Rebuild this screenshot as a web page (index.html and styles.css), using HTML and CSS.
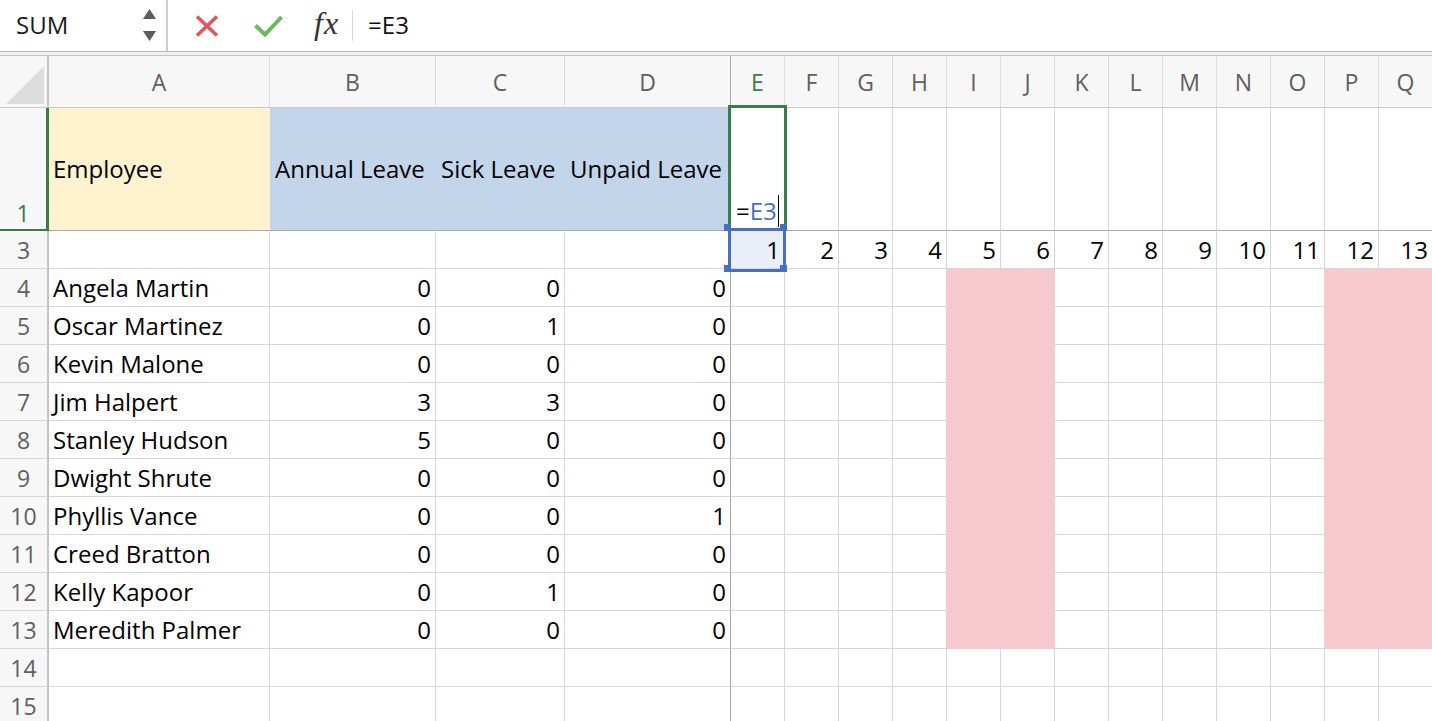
FILE: index.html
```html
<!DOCTYPE html>
<html>
<head>
<meta charset="utf-8">
<link rel="stylesheet" href="styles.css">
</head>
<body>
<div class="app">
  <div class="fbar">
    <div class="namebox">
      <span class="nb-text">SUM</span>
      <svg class="spin" width="13" height="34" viewBox="0 0 13 34"><polygon points="0,10 6.5,0 13,10" fill="#5b5b5b"/><polygon points="0,22 13,22 6.5,32" fill="#5b5b5b"/></svg>
    </div>
    <svg class="ic-x" width="24" height="22" viewBox="0 0 24 22"><path d="M2 1.5 L22 20.5 M22 1.5 L2 20.5" stroke="#d9585b" stroke-width="3.6" fill="none"/></svg>
    <svg class="ic-ok" width="29" height="22" viewBox="0 0 29 22"><path d="M1.5 10.5 L11 19.5 L27.5 2" stroke="#69ba5e" stroke-width="4" fill="none"/></svg>
    <span class="fx">fx</span>
    <div class="fsep"></div>
    <div class="finput">=E3</div>
  </div>
  <div class="fgap"></div>
  <div class="sheet">
    <div class="row hdr">
      <div class="corner"><svg width="40" height="40" viewBox="0 0 40 40"><polygon points="2,40 40,40 40,2" fill="#dcdcdc"/></svg></div>
      <div>A</div><div>B</div><div>C</div><div class="frz">D</div><div class="hsel">E</div><div>F</div><div>G</div><div>H</div><div>I</div><div>J</div><div>K</div><div>L</div><div>M</div><div>N</div><div>O</div><div>P</div><div>Q</div>
    </div>
    <div class="row r1">
      <div class="rh rh1">1</div>
      <div class="yel">Employee</div>
      <div class="blu">Annual Leave</div>
      <div class="blu">Sick Leave</div>
      <div class="blu frz">Unpaid Leave</div>
      <div class="edit">=<span class="ref">E3</span><span class="caret"></span></div>
      <div></div><div></div><div></div><div></div><div></div><div></div><div></div><div></div><div></div><div></div><div></div><div></div>
    </div>
    <div class="row">
      <div class="rh">3</div>
      <div></div><div></div><div></div><div class="frz"></div>
      <div class="n e3">1</div><div class="n">2</div><div class="n">3</div><div class="n">4</div><div class="n">5</div><div class="n">6</div><div class="n">7</div><div class="n">8</div><div class="n">9</div><div class="n">10</div><div class="n">11</div><div class="n">12</div><div class="n">13</div>
    </div>
    <div class="row">
      <div class="rh">4</div><div>Angela Martin</div><div class="n">0</div><div class="n">0</div><div class="n frz">0</div>
      <div></div><div></div><div></div><div class="pl"></div><div class="pink"></div><div class="pink"></div><div></div><div></div><div></div><div></div><div class="pl"></div><div class="pink"></div><div class="pink"></div>
    </div>
    <div class="row">
      <div class="rh">5</div><div>Oscar Martinez</div><div class="n">0</div><div class="n">1</div><div class="n frz">0</div>
      <div></div><div></div><div></div><div class="pl"></div><div class="pink"></div><div class="pink"></div><div></div><div></div><div></div><div></div><div class="pl"></div><div class="pink"></div><div class="pink"></div>
    </div>
    <div class="row">
      <div class="rh">6</div><div>Kevin Malone</div><div class="n">0</div><div class="n">0</div><div class="n frz">0</div>
      <div></div><div></div><div></div><div class="pl"></div><div class="pink"></div><div class="pink"></div><div></div><div></div><div></div><div></div><div class="pl"></div><div class="pink"></div><div class="pink"></div>
    </div>
    <div class="row">
      <div class="rh">7</div><div>Jim Halpert</div><div class="n">3</div><div class="n">3</div><div class="n frz">0</div>
      <div></div><div></div><div></div><div class="pl"></div><div class="pink"></div><div class="pink"></div><div></div><div></div><div></div><div></div><div class="pl"></div><div class="pink"></div><div class="pink"></div>
    </div>
    <div class="row">
      <div class="rh">8</div><div>Stanley Hudson</div><div class="n">5</div><div class="n">0</div><div class="n frz">0</div>
      <div></div><div></div><div></div><div class="pl"></div><div class="pink"></div><div class="pink"></div><div></div><div></div><div></div><div></div><div class="pl"></div><div class="pink"></div><div class="pink"></div>
    </div>
    <div class="row">
      <div class="rh">9</div><div>Dwight Shrute</div><div class="n">0</div><div class="n">0</div><div class="n frz">0</div>
      <div></div><div></div><div></div><div class="pl"></div><div class="pink"></div><div class="pink"></div><div></div><div></div><div></div><div></div><div class="pl"></div><div class="pink"></div><div class="pink"></div>
    </div>
    <div class="row">
      <div class="rh">10</div><div>Phyllis Vance</div><div class="n">0</div><div class="n">0</div><div class="n frz">1</div>
      <div></div><div></div><div></div><div class="pl"></div><div class="pink"></div><div class="pink"></div><div></div><div></div><div></div><div></div><div class="pl"></div><div class="pink"></div><div class="pink"></div>
    </div>
    <div class="row">
      <div class="rh">11</div><div>Creed Bratton</div><div class="n">0</div><div class="n">0</div><div class="n frz">0</div>
      <div></div><div></div><div></div><div class="pl"></div><div class="pink"></div><div class="pink"></div><div></div><div></div><div></div><div></div><div class="pl"></div><div class="pink"></div><div class="pink"></div>
    </div>
    <div class="row">
      <div class="rh">12</div><div>Kelly Kapoor</div><div class="n">0</div><div class="n">1</div><div class="n frz">0</div>
      <div></div><div></div><div></div><div class="pl"></div><div class="pink"></div><div class="pink"></div><div></div><div></div><div></div><div></div><div class="pl"></div><div class="pink"></div><div class="pink"></div>
    </div>
    <div class="row">
      <div class="rh">13</div><div>Meredith Palmer</div><div class="n">0</div><div class="n">0</div><div class="n frz">0</div>
      <div></div><div></div><div></div><div class="pl"></div><div class="pink"></div><div class="pink"></div><div></div><div></div><div></div><div></div><div class="pl"></div><div class="pink"></div><div class="pink"></div>
    </div>
    <div class="row">
      <div class="rh">14</div><div></div><div></div><div></div><div class="frz"></div>
      <div></div><div></div><div></div><div></div><div></div><div></div><div></div><div></div><div></div><div></div><div></div><div></div><div></div>
    </div>
    <div class="row">
      <div class="rh">15</div><div></div><div></div><div></div><div class="frz"></div>
      <div></div><div></div><div></div><div></div><div></div><div></div><div></div><div></div><div></div><div></div><div></div><div></div><div></div>
    </div>

    <div class="sel-edit"></div>
    <div class="sel-ref"></div>
    <div class="handle h-tl"></div>
    <div class="handle h-tr"></div>
    <div class="handle h-bl"></div>
    <div class="handle h-br"></div>
  </div>
</div>
</body>
</html>
```
FILE: styles.css
```css
html, body {
  margin: 0;
  padding: 0;
  background: #ffffff;
}
body {
  font-family: "Open Sans", "Noto Sans", sans-serif;
  overflow: hidden;
}
.app {
  width: 1432px;
  height: 721px;
  overflow: hidden;
}

/* formula bar */
.fbar {
  height: 51px;
  border-bottom: 1px solid #b8b8b8;
  display: flex;
  align-items: center;
}
.namebox {
  width: 168px;
  height: 51px;
  box-sizing: border-box;
  border-right: 2px solid #cdcdcd;
  display: flex;
  align-items: center;
  padding-left: 16px;
  padding-right: 10px;
  justify-content: space-between;
}
.nb-text {
  font-size: 24px;
  color: #1a1a1a;
  margin-top: -3px;
}
.spin {
  display: block;
  margin-top: 1px;
}
.ic-x {
  display: block;
  margin-left: 27px;
}
.ic-ok {
  display: block;
  margin-left: 35px;
}
.fx {
  font-family: "Liberation Serif", serif;
  font-style: italic;
  font-size: 32px;
  letter-spacing: 1px;
  color: #333333;
  margin-left: 31px;
  line-height: 1;
  margin-top: -5px;
}
.fsep {
  width: 1px;
  height: 31px;
  background: #d8d8d8;
  margin-left: 13px;
}
.finput {
  margin-left: 15px;
  font-size: 24px;
  color: #111111;
  margin-top: -3px;
}
.fgap {
  height: 3px;
  background: #f2f2f2;
  border-bottom: 1px solid #c4c4c4;
}

/* sheet */
.sheet {
  position: relative;
}
.row {
  display: grid;
  grid-template-columns: 49px 221px 166px 129px 166px repeat(13, 54px);
  height: 38px;
}
.row > div {
  box-sizing: border-box;
  border-right: 1px solid #d6d6d6;
  border-bottom: 1px solid #d6d6d6;
  display: flex;
  align-items: center;
  padding: 0 4px;
  white-space: nowrap;
  overflow: hidden;
  font-size: 24px;
  line-height: 30px;
  color: #000000;
}
.row > .n {
  justify-content: flex-end;
}
.row > .frz {
  border-right-color: #a8a8a8;
}

/* column header */
.hdr {
  height: 52px;
}
.hdr > div {
  background: #f7f7f7;
  justify-content: center;
  color: #5f5f5f;
  border-right-color: #dcdcdc;
  border-bottom-color: #c8c8c8;
  font-size: 23px;
}
.hdr > .hsel {
  color: #3b7a4b;
}
.hdr > .corner {
  border-right: 2px solid #c3c3c3;
  padding: 0;
  align-items: flex-end;
  justify-content: flex-end;
  padding-right: 3px;
  padding-bottom: 3px;
}
.corner svg {
  display: block;
}

/* row headers */
.row > .rh {
  background: #f7f7f7;
  justify-content: center;
  color: #5f5f5f;
  border-right: 2px solid #c3c3c3;
  padding: 0;
  font-size: 23px;
}
.row > .rh1 {
  color: #3b7a4b;
  border-right: 3px solid #3b7a4b;
  border-bottom: 2px solid #3b7a4b;
  align-items: flex-end;
  padding-bottom: 1px;
}

/* row 1 */
.r1 {
  height: 123px;
}
.r1 > div {
  border-bottom-color: #a8a8a8;
}
.row > .yel {
  background: #fff2cf;
  border-right-color: #fff2cf;
}
.row > .blu {
  background: #c2d5eb;
  border-right-color: #c2d5eb;
  padding-left: 5px;
}
.row > .blu.frz {
  border-right-color: #a8a8a8;
}
.row > .edit {
  align-items: flex-end;
  padding-bottom: 4px;
  padding-left: 5px;
}
.ref {
  color: #4a6fc0;
}
.caret {
  display: inline-block;
  width: 1px;
  height: 32px;
  background: #000000;
  margin-left: 1px;
  align-self: flex-end;
  margin-bottom: -1px;
}

/* highlighted cells */
.row > .e3 {
  background: #e9eef8;
}
.row > .pink {
  background: #f6c9cf;
  border-right-color: #f6c9cf;
  border-bottom-color: #f6c9cf;
}
.row > .pl {
  border-right-color: #f6c9cf;
}

/* selection overlays */
.sel-edit {
  position: absolute;
  left: 728px;
  top: 49px;
  width: 59px;
  height: 126px;
  box-sizing: border-box;
  border: 3px solid #3b7a4b;
}
.sel-ref {
  position: absolute;
  left: 728px;
  top: 172px;
  width: 58px;
  height: 44px;
  box-sizing: border-box;
  border: 3px solid #4a6fc0;
}
.handle {
  position: absolute;
  width: 7px;
  height: 7px;
  background: #4a6fc0;
}
.h-tl { left: 724px; top: 168px; }
.h-tr { left: 780px; top: 168px; }
.h-bl { left: 724px; top: 209px; }
.h-br { left: 780px; top: 209px; }
```
